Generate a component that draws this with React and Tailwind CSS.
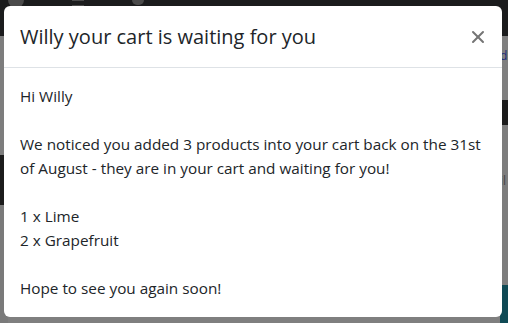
import { X } from 'lucide-react';

const App = () => {
  return (
    <div className="relative w-[508px] h-[323px] overflow-hidden bg-[#7f7f7f] font-['Open_Sans',sans-serif]">

      {/* ── Dimmed page behind ── */}
      <div className="h-[36px] bg-[#1b1c1d] flex items-start gap-12 px-2">
        <div className="w-4 h-4 rounded-full bg-[#4a4a4a] -mt-2"></div>
        <div className="w-3 h-[6px] border-y border-[#4a4a4a]"></div>
        <div className="w-3 h-[5px] rounded-b-full bg-[#4a4a4a]"></div>
      </div>
      <div className="flex justify-between h-[287px]">
        <div className="w-2 flex flex-col">
          <div className="h-[119px] bg-[#7d7d7d]"></div>
          <div className="h-[50px] bg-[#1c1c1c]"></div>
          <div className="flex-1 bg-[#7a7a7a]"></div>
        </div>
        <div className="w-2 flex flex-col">
          <div className="h-[64px] bg-[#7f7f7f] text-[#1a2a7a] text-xs pt-3">d</div>
          <div className="h-[25px] bg-[#1c1c1c]"></div>
          <div className="h-[160px] bg-[#7d7d7d] text-[#444] text-xs pt-12">il</div>
          <div className="flex-1 bg-[#0f4a55]"></div>
        </div>
      </div>

      {/* ── Modal ── */}
      <div className="absolute left-[4px] top-[6px] w-[498px] h-[311px] rounded-md bg-white text-[#212529]">
        <div className="h-[62px] border-b border-[#dee2e6] pl-4 pr-[14px] flex items-center justify-between">
          <h1 className="text-[20px] font-medium">Willy your cart is waiting for you</h1>
          <X className="w-[20px] h-[20px] text-[#757575]" strokeWidth={2.4} />
        </div>
        <div className="p-4 text-[15.3px] leading-6 whitespace-nowrap">
          Hi Willy<br />
          <br />
          We noticed you added 3 products into your cart back on the 31st<br />
          of August - they are in your cart and waiting for you!<br />
          <br />
          1 x Lime<br />
          2 x Grapefruit<br />
          <br />
          Hope to see you again soon!
        </div>
      </div>
    </div>
  );
};

export default App;
